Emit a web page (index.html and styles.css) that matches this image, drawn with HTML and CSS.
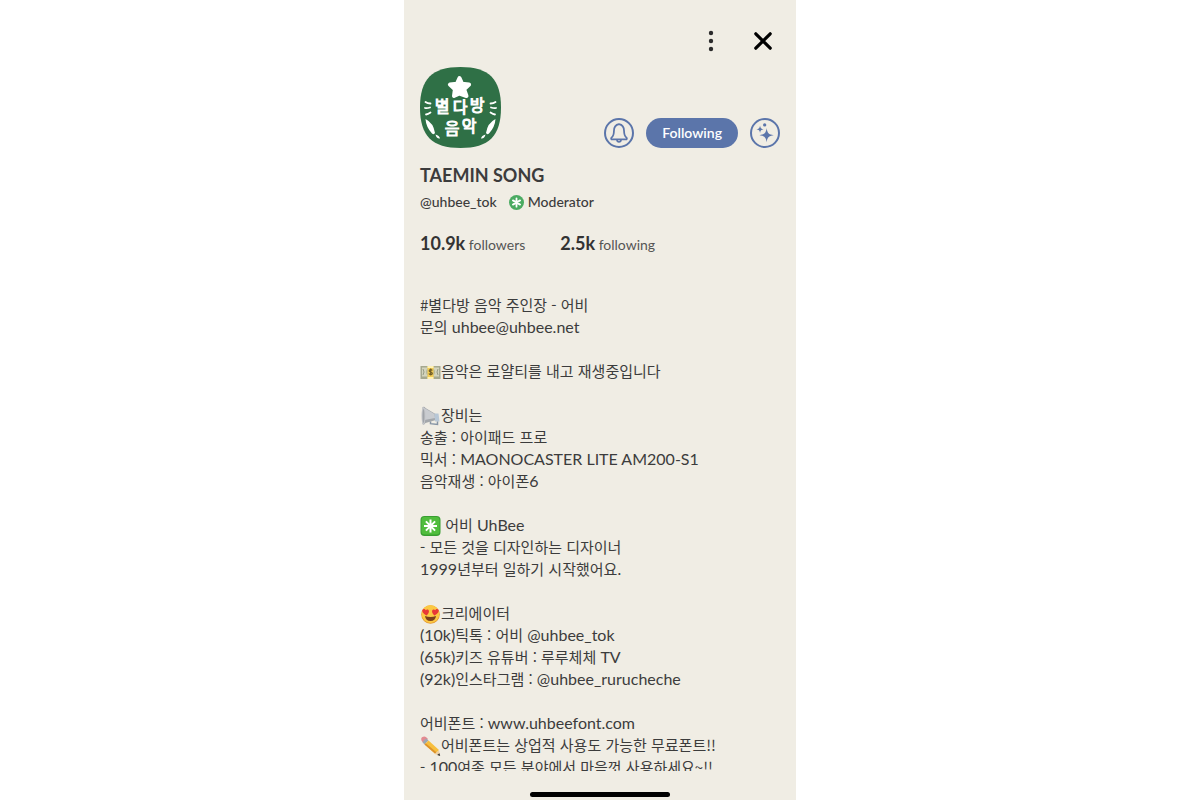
FILE: index.html
```html
<!DOCTYPE html>
<html lang="ko">
<head>
    <meta charset="UTF-8">
    <meta name="viewport" content="width=device-width, initial-scale=1.0">
    <title>TAEMIN SONG</title>
    <link rel="stylesheet" href="styles.css">
</head>
<body>
    <main class="profile">
        <!-- Top bar -->
        <div class="top-bar">
            <button class="icon-btn" type="button" aria-label="More options">
                <svg width="24" height="24" viewBox="0 0 24 24" fill="#2b2b2b">
                    <circle cx="12" cy="4" r="2.200"/>
                    <circle cx="12" cy="12" r="2.200"/>
                    <circle cx="12" cy="20" r="2.200"/>
                </svg>
            </button>
            <button class="icon-btn" type="button" aria-label="Close">
                <svg width="24" height="24" viewBox="0 0 24 24" fill="none" stroke="#000" stroke-width="3.200" stroke-linecap="round">
                    <path d="M4.800 4.800 19.200 19.200M19.200 4.800 4.800 19.200"/>
                </svg>
            </button>
        </div>

        <!-- Avatar and actions -->
        <div class="head">
            <svg class="avatar" viewBox="0 0 81 81" role="img" aria-label="별다방 음악">
                <path fill="#2f7046" d="M40.500 0C69 0 81 12 81 40.500S69 81 40.500 81 0 69 0 40.500 12 0 40.500 0Z"/>
                <path fill="#fff" stroke="#fff" stroke-width="4" stroke-linejoin="round" d="m39.500 11 2.600 5.800 7 .7-5 4.700 2.400 6.800-7-2.500-5.500 2.500.9-6.800-5-4.700 7-.7Z"/>
                <g class="logo-text" text-anchor="middle">
                    <text x="22" y="45">별</text>
                    <text x="40" y="46">다</text>
                    <text x="57" y="44">방</text>
                    <text x="32" y="67">음</text>
                    <text x="49" y="65">악</text>
                </g>
                <g fill="none" stroke="#fff" stroke-width="1.800" stroke-linecap="round">
                    <path d="M5.500 35q2 1.500 5 1.500M5 41q2 .5 5-.5M6 47.500q2-.2 4.500-2M75.500 35q-2 1.500-5 1.500M76 41q-2 .5-5-.5M75 47.500q-2-.2-4.500-2"/>
                </g>
                <path fill="#fff" d="M5.500 52q8 4 9.500 14-1 2-3 .5Q6 60 5.500 52ZM75.500 52q-8 4-9.500 14 1 2 3 .5Q75 60 75.500 52ZM15.500 67.500q4 1 4.500 4-3.500.5-4.500-4ZM65.500 67.500q-4 1-4.500 4 3.500.5 4.500-4Z"/>
            </svg>
            <div class="actions">
                <button class="round-btn" type="button" aria-label="Notifications">
                    <svg width="22" height="22" viewBox="0 0 20 20" fill="none" stroke="#5b75aa" stroke-width="1.600" stroke-linejoin="round">
                        <path d="M10 2c-3.300.6-4.600 3-4.600 6.200 0 3.400-.5 4.700-2.200 6-.7.700-.3 1.700.6 1.700h12.400c.9 0 1.300-1 .6-1.700-1.700-1.300-2.200-2.600-2.200-6C14.600 5 13.300 2.600 10 2Z"/>
                        <path d="M8.200 16.200c.2 2.400 3.400 2.400 3.600 0"/>
                    </svg>
                </button>
                <button class="follow-btn" type="button">Following</button>
                <button class="round-btn" type="button" aria-label="Suggestions">
                    <svg width="22" height="22" viewBox="0 0 20 20" fill="#5b75aa">
                        <path d="M11.500 5.500c.6 4.400 1.700 5.900 6.500 6.500-4.800.6-5.900 2.100-6.500 6.500-.6-4.400-1.700-5.900-6.500-6.500 4.800-.6 5.900-2.100 6.500-6.500Z"/>
                        <path d="M5.500 3.500c.4 2.200 1 2.800 3.300 3.200C6.500 7.100 5.900 7.700 5.500 9.900 5.100 7.700 4.500 7.100 2.200 6.700c2.300-.4 2.900-1 3.300-3.200Z"/>
                        <circle cx="9.700" cy="2.700" r="1.500"/>
                    </svg>
                </button>
            </div>
        </div>

        <h1>TAEMIN SONG</h1>
        <div class="handle">
            <span>@uhbee_tok</span>
            <span class="badge">
                <svg width="15" height="15" viewBox="0 0 15 15">
                    <circle cx="7.500" cy="7.500" r="7.500" fill="#4bab62"/>
                    <path stroke="#fff" stroke-width="1.800" stroke-linecap="round" d="M7.500 3.300v8.400M3.900 5.400l7.200 4.200M11.100 5.400 3.900 9.600"/>
                </svg>
                Moderator
            </span>
        </div>
        <div class="stats">
            <a href="#followers"><strong>10.9k</strong> followers</a>
            <a href="#following"><strong>2.5k</strong> following</a>
        </div>

        <!-- Bio -->
        <div class="bio">
            <p>#별다방 음악 주인장 - 어비<br>
            문의 <span class="en">uhbee@uhbee.net</span></p>

            <p><svg class="emoji" viewBox="0 0 20 20">
                <path fill="#a5a88f" d="M0 4h20v13H0z"/>
                <path fill="#d3d4bd" d="M1.500 5.500h17v9h-17z"/>
                <path fill="none" stroke="#969b85" d="M2.500 7q2 3 0 6M17.500 7q-2 3 0 6"/>
                <circle cx="10" cy="10" r="4.500" fill="#b4b69b"/>
                <path fill="#f5cf55" d="M7 4h6v13H7z"/>
                <path fill="#fff1b5" d="M7 4h6v2H7zM7 15h6v2H7z"/>
                <path fill="none" stroke="#705d28" stroke-width="1.200" d="M11.800 8.500C11 7 8.500 7.500 8.700 9c.2 1.300 3 .8 3.100 2.300.1 1.500-2.600 1.700-3.400.2M10.200 6.500v7"/>
            </svg>음악은 로얄티를 내고 재생중입니다</p>

            <p><svg class="emoji" viewBox="0 0 20 20">
                <path fill="#a3a7ab" d="M2 1q2-1 3 1l10 6 .5 6L5 17q-2 3-3 1Z"/>
                <path fill="#c9ccd0" d="M3 1.500 14 8l.5 4L4 14Z"/>
                <ellipse cx="3" cy="10" rx="2" ry="9" fill="#c4c6ca"/>
                <ellipse cx="3" cy="10" rx="1" ry="7" fill="#a0a4a9"/>
                <path fill="#b7c7d6" d="M14 7.500h4l1 8h-4.500Z"/>
                <path fill="none" stroke="#8594a4" stroke-width="1.500" d="M10 15.500v2.200l7 .8v-3"/>
            </svg>장비는<br>
            송출 : 아이패드 프로<br>
            믹서 : <span class="en">MAONOCASTER LITE AM200-S1</span><br>
            음악재생 : 아이폰<span class="en">6</span></p>

            <p><svg class="emoji" viewBox="0 0 20 20">
                <rect width="20" height="20" rx="4" fill="#389e31"/>
                <rect x="1" y="1" width="18" height="17.500" rx="3" fill="#50bd3d"/>
                <path stroke="#fff" stroke-width="2" d="M10 3.500v13M3.500 10h13M5.400 5.400l9.200 9.200M14.600 5.400l-9.200 9.200"/>
            </svg> 어비 <span class="en">UhBee</span><br>
            - 모든 것을 디자인하는 디자이너<br>
            <span class="en">1999</span>년부터 일하기 시작했어요.</p>

            <p><svg class="emoji" viewBox="0 0 20 20">
                <circle cx="10" cy="10.500" r="9.300" fill="#e5952b"/>
                <circle cx="10" cy="10" r="8.900" fill="#fbc843"/>
                <path fill="#e93737" d="M6 11.500C2.500 9.800 1 7.500 2 5.800c1.100-1.300 2.700-.7 3.200.4.900-1 2.700-.9 3.200.5.400 1.800-.9 3.300-2.400 4.800ZM14 11.500c3.500-1.700 5-4 4-5.700-1.100-1.300-2.700-.7-3.200.4-.9-1-2.700-.9-3.200.5-.4 1.800.9 3.300 2.400 4.800Z"/>
                <path fill="#7b3f1d" d="M4.500 12q5.500 2 11 0-.6 5-5.500 5t-5.500-5Z"/>
            </svg>크리에이터<br>
            <span class="en">(10k)</span>틱톡 : 어비 <span class="en">@uhbee_tok</span><br>
            <span class="en">(65k)</span>키즈 유튜버 : 루루체체 <span class="en">TV</span><br>
            <span class="en">(92k)</span>인스타그램 : <span class="en">@uhbee_rurucheche</span></p>

            <p>어비폰트 : <span class="en">www.uhbeefont.com</span><br>
            <svg class="emoji" viewBox="0 0 20 20">
                <path fill="#e38a91" d="M1 4.500Q0 2 2 1t4 .5L7.500 3 3 7.500Z"/>
                <path fill="#9ba8b4" d="M5.500 2.500 8 4.500 4 8.500 2 6Z"/>
                <path fill="#f7bf3d" d="M8 4.500 18.500 14 15 18 4 8.500Z"/>
                <path fill="#dd922a" d="M4 8.500 15 18l1.200-1.400L5.200 7.200Z"/>
                <path fill="#efd2a6" d="m18.500 14 1 5.800L14 18Z"/>
                <path fill="#333" d="m19 17.300.7 2.700-3-1Z"/>
            </svg>어비폰트는 상업적 사용도 가능한 무료폰트!!<br>
            - <span class="en">100</span>여종 모든 분야에서 마음껏 사용하세요~!!</p>
        </div>

        <div class="home-indicator"></div>
    </main>
</body>
</html>
```

FILE: styles.css
```css
* {
    box-sizing: border-box;
}
body {
    margin: 0;
    background-color: #fff;
    color: #3c3c3c;
    font-family: Lato, "Noto Sans CJK KR", sans-serif;
}
.profile {
    display: flex;
    flex-direction: column;
    max-width: 392px;
    height: 100vh;
    margin: 0 auto;
    padding: 26px 16px 3px;
    background-color: #f0ede4;
}
button {
    padding: 0;
    border: none;
    background: none;
    font-family: inherit;
    cursor: pointer;
}
.top-bar {
    display: flex;
    justify-content: flex-end;
    gap: 22px;
    margin-bottom: 11px;
    padding-right: 2px;
}
.icon-btn {
    width: 30px;
    height: 30px;
}
.icon-btn svg {
    display: block;
    margin: auto;
}
.head {
    display: flex;
    justify-content: space-between;
    align-items: flex-end;
}
.avatar {
    width: 81px;
    height: 81px;
}
.logo-text {
    fill: #fff;
    stroke: #fff;
    stroke-width: 1px;
    font-size: 16px;
}
.actions {
    display: flex;
    gap: 12px;
}
.round-btn {
    display: flex;
    align-items: center;
    justify-content: center;
    width: 30px;
    height: 30px;
    border: 2px solid #5b75aa;
    border-radius: 50%;
}
.round-btn svg {
    flex: none;
}
.follow-btn {
    height: 30px;
    padding: 0 16px 2px;
    border-radius: 15px;
    background-color: #5b75aa;
    color: #fff;
    font-size: 14px;
    font-weight: 600;
}
h1 {
    margin: 15px 0 0;
    font-size: 18px;
    font-weight: 700;
    line-height: 24px;
}
.handle {
    display: flex;
    gap: 12px;
    margin-top: 5px;
    font-size: 14px;
    font-weight: 500;
    line-height: 20px;
}
.badge {
    display: flex;
    align-items: center;
    gap: 4px;
}
.stats {
    display: flex;
    gap: 35px;
    margin-top: 19px;
    font-size: 14px;
    line-height: 24px;
}
.stats a {
    color: #555;
    text-decoration: none;
}
.stats strong {
    color: #333;
    font-size: 18px;
}
.bio {
    flex: 1;
    min-height: 0;
    margin-top: 37px;
    overflow: hidden;
    font-family: "Noto Sans CJK KR", sans-serif;
    font-size: 15px;
    line-height: 22px;
}
.bio p {
    margin: 0 0 22px;
}
.en {
    font-family: Lato, sans-serif;
    font-size: 16px;
    line-height: 1;
}
.emoji {
    width: 21px;
    height: 20px;
    vertical-align: -5px;
}
.home-indicator {
    width: 140px;
    height: 5px;
    margin: 21px auto 0;
    border-radius: 3px;
    background-color: #000;
}
```
